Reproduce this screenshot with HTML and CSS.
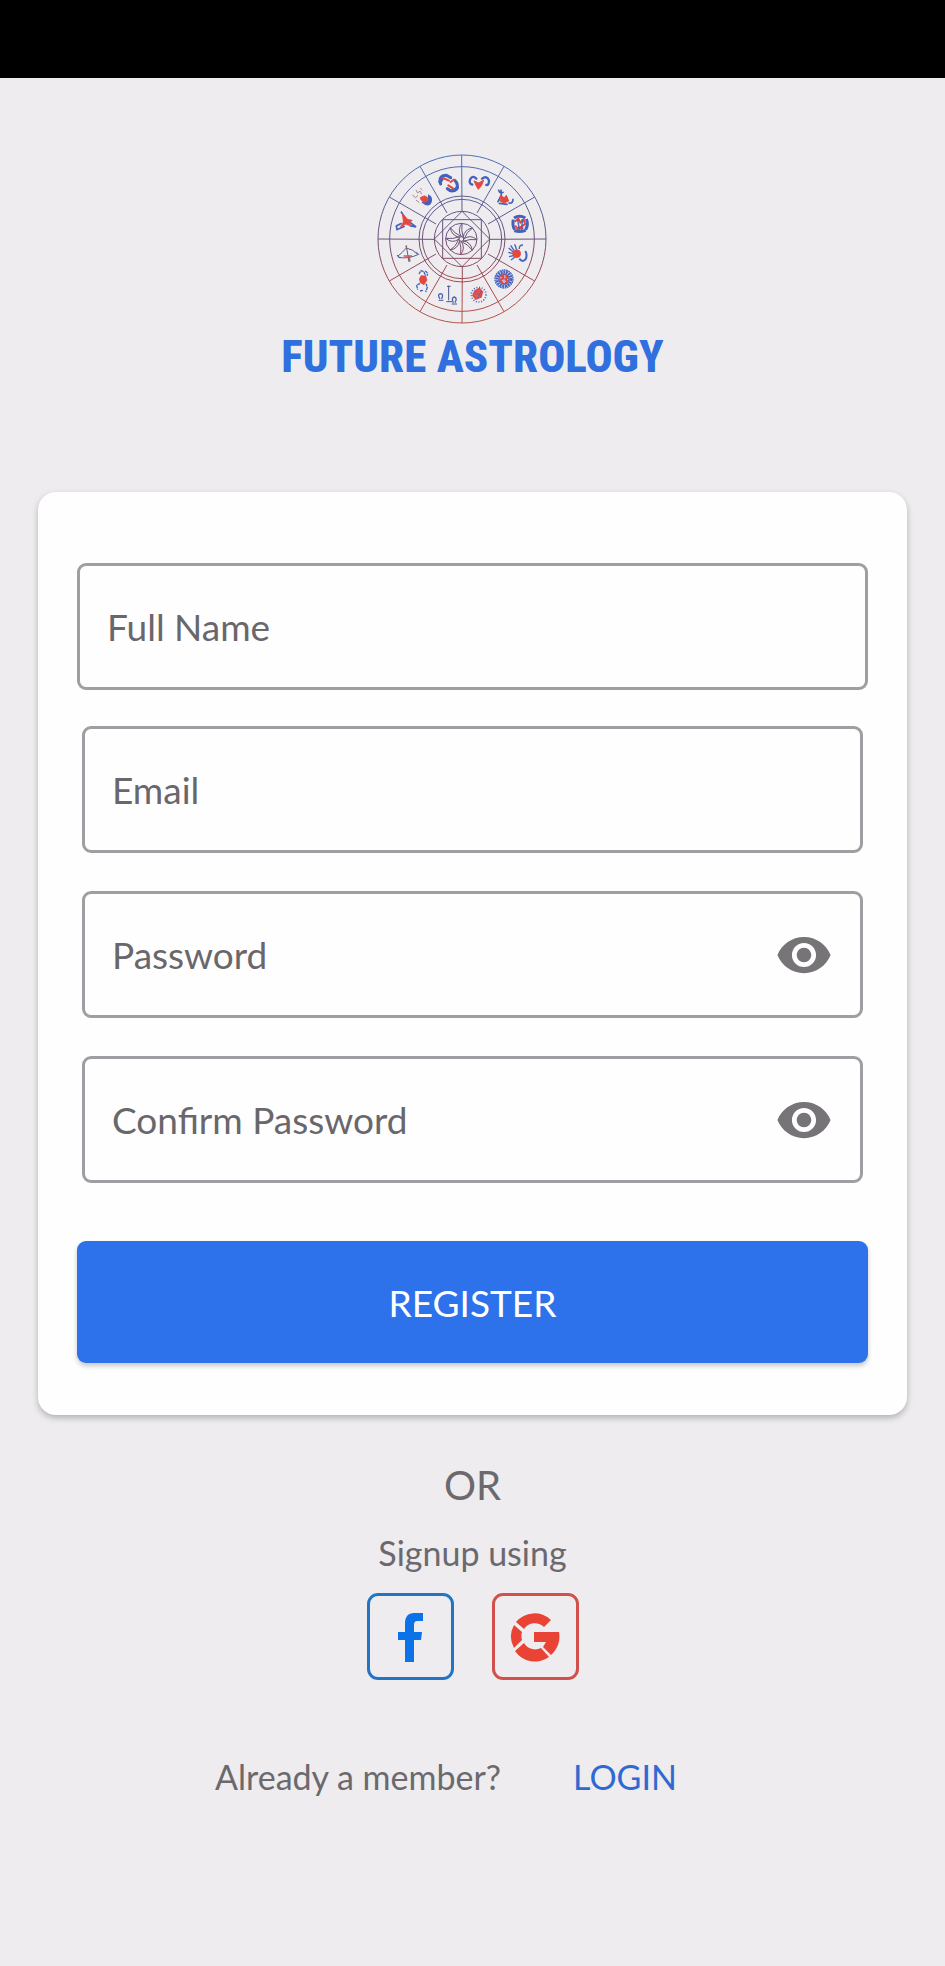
FILE: index.html
```html
<!DOCTYPE html>
<html lang="en">
<head>
    <meta charset="UTF-8">
    <meta name="viewport" content="width=device-width, initial-scale=1.0">
    <title>Future Astrology - Register</title>
    <link rel="stylesheet" href="styles.css">
</head>
<body>
    <div class="status-bar"></div>

    <header class="brand">
        <svg class="wheel" viewBox="49 40 516 516" fill="none" aria-hidden="true">
            <defs>
                <linearGradient id="ink" gradientUnits="userSpaceOnUse" x1="0" y1="46" x2="0" y2="550">
                    <stop offset="0" stop-color="#4672b8"/>
                    <stop offset="0.5" stop-color="#6a5078"/>
                    <stop offset="0.75" stop-color="#a54a50"/>
                    <stop offset="1" stop-color="#b05548"/>
                </linearGradient>
            </defs>
            <!-- rings and spokes -->
            <g stroke="url(#ink)" stroke-width="3">
                <circle cx="307" cy="298" r="252"/>
                <circle cx="307" cy="298" r="217"/>
                <circle cx="307" cy="298" r="129"/>
                <circle cx="307" cy="298" r="119"/>
                <circle cx="307" cy="298" r="83"/>
                <path d="M306 46 307 215M308 381 307 550M55 298 224 299M390 299 559 298"/>
                <path d="M433 80 352 220M525 172 385 253M525 424 385 343M433 516 352 376M181 516 262 376M89 424 229 343M89 172 229 253M181 80 262 220"/>
                <path d="M249 240H365V356H249ZM307 215 390 298 307 381 224 298Z"/>
                <circle cx="305" cy="298" r="47"/>
                <circle cx="305" cy="298" r="7"/>
                <path d="M305 291Q292 270 307 251M310 293Q315 268 339 265M312 298Q332 283 352 300M310 303Q335 308 338 332M305 305Q318 326 303 345M300 303Q295 328 271 331M298 298Q278 313 258 296M300 293Q275 288 272 264"/>
                <path d="M307 251Q304 274 311 294M339 265Q320 276 313 299M352 300Q330 297 310 305M338 332Q326 314 304 305M303 345Q306 322 299 302M271 331Q290 320 297 297M258 296Q280 299 300 291M272 264Q284 282 306 291"/>
            </g>
            <!-- pisces -->
            <g stroke="#4262bd" stroke-width="9" stroke-linecap="round">
                <path d="M243 133Q235 108 260 107L273 114M263 147Q276 160 291 148Q297 134 286 123"/>
                <path d="M241 127 247 119M284 152 293 144" stroke-width="10"/>
                <path d="M250 115 268 123M266 137 280 146M273 127 283 120" stroke="#e2483d" stroke-width="6"/>
            </g>
            <!-- aries -->
            <g stroke="#4262bd" stroke-width="7" stroke-linecap="round">
                <path d="M338 135Q326 131 332 118Q339 106 350 117M367 117Q382 106 388 123Q388 136 380 136"/>
                <path d="M344 124 357 130 372 121 366 137 356 149 349 137Z" stroke="#e2483d" fill="#e2483d" stroke-width="3"/>
            </g>
            <!-- taurus -->
            <g stroke="#4262bd" stroke-width="5" stroke-linecap="round">
                <path d="M417 152Q421 164 430 158M424 151 425 166 415 186M448 190Q459 193 460 179M419 191 442 194"/>
                <path d="M424 169 434 174 440 167 447 184 433 190 421 184Z" stroke="#e2483d" fill="#e2483d" stroke-width="3"/>
            </g>
            <!-- gemini -->
            <g stroke="#4262bd" stroke-width="9">
                <path d="M463 235Q480 225 497 235M461 240Q457 257 465 270M500 238Q507 254 498 270M464 273Q480 279 498 272"/>
                <path d="M465 246 476 237 482 249 492 239 496 253 485 261 474 266 466 258M470 269 491 265" stroke="#e2483d" stroke-width="6"/>
                <path d="M474 240 479 270M488 238 486 274" stroke-width="4"/>
            </g>
            <!-- cancer -->
            <g stroke="#4262bd" stroke-width="4">
                <path d="M463 332 453 317M461 337 447 325M460 342 446 338M461 348 448 351M465 353 454 361M471 330 465 314M479 328Q478 316 490 316"/>
                <path d="M479 357Q489 371 499 357Q503 344 497 334" stroke-width="6"/>
                <circle cx="471" cy="342" r="12" fill="#e2483d" stroke="#e2483d" stroke-width="2"/>
            </g>
            <!-- leo -->
            <g stroke="#4262bd">
                <circle cx="433" cy="418" r="27" stroke-width="4" stroke-dasharray="5 2"/>
                <circle cx="433" cy="418" r="21" stroke-width="9" stroke-dasharray="6 2"/>
                <circle cx="433" cy="418" r="15" stroke="#4b61bb" stroke-width="4" fill="#cbb0cf"/>
                <path d="M423 411 431 406 430 417 421 421 429 431M438 407 445 413 437 418 444 426 437 431" stroke="#e2483d" stroke-width="6"/>
            </g>
            <!-- virgo -->
            <g stroke="#4262bd">
                <circle cx="357" cy="465" r="22" stroke-width="5" stroke-dasharray="3 5"/>
                <path d="M346 454 359 447 368 457 364 472 349 478 340 467Z" stroke="#e2483d" stroke-width="5" fill="#e2574f"/>
                <path d="M348 458 362 467M365 454 356 472" stroke-width="2"/>
            </g>
            <!-- libra -->
            <g stroke="#4b5683" stroke-width="3">
                <path d="M267 438V482M262 440H273M260 486H277"/>
                <path d="M241 478Q232 464 242 462Q253 463 246 478M281 489Q274 473 284 472Q294 475 286 489" stroke="#4563ad" stroke-width="4"/>
                <path d="M237 482H251M276 493H292"/>
            </g>
            <!-- scorpio -->
            <g stroke="#4262bd" stroke-width="4">
                <path d="M178 403 184 393 193 396 198 410M196 394Q207 399 202 408M181 431 171 437 174 450M199 432 203 443 198 457M181 454 190 452" stroke-dasharray="9 2"/>
                <path d="M184 408 198 409 202 421 193 435 182 429 179 418Z" fill="#e2483d" stroke="#e2483d" stroke-width="2"/>
            </g>
            <!-- sagittarius -->
            <g stroke="#536092" stroke-width="3">
                <path d="M140 319 148 367M114 350Q129 338 140 325Q162 329 173 344M115 352Q143 360 177 344M112 346 121 356M169 336 178 345"/>
                <path d="M138 323 141 317M148 348 151 366M132 349H157" stroke="#d35450" stroke-width="4"/>
            </g>
            <!-- capricorn -->
            <g stroke="#4262bd" stroke-width="5">
                <path d="M124 216Q132 225 135 239M126 251 110 259 112 270 135 260M151 248 169 262 150 258"/>
                <path d="M128 221 144 239 158 242 150 249 154 258 137 254 121 264 131 247Z" fill="#e2483d" stroke="#e2483d" stroke-width="2"/>
            </g>
            <!-- aquarius -->
            <g stroke="#4262bd" stroke-width="4">
                <path d="M187 187Q207 204 214 187Q218 172 207 167Q208 190 189 188Z" fill="#4262bd"/>
                <path d="M181 174 194 168 203 173 205 184 193 188 184 181Z" fill="#e2483d" stroke="#e2483d" stroke-width="2"/>
                <path d="M169 151 174 160 181 154 186 164M158 166 168 174 175 167M169 181 179 189M182 146 188 151" stroke="#a1898d" stroke-width="3"/>
            </g>
        </svg>
        <h1 class="brand-name">FUTURE ASTROLOGY</h1>
    </header>

    <main>
        <form class="card">
            <div class="field field-wide">
                <input type="text" placeholder="Full Name" aria-label="Full Name">
            </div>
            <div class="field">
                <input type="email" placeholder="Email" aria-label="Email">
            </div>
            <div class="field">
                <input type="password" placeholder="Password" aria-label="Password">
                <button type="button" class="toggle" aria-label="Show password">
                    <svg viewBox="0 0 24 24"><path d="M12 4.5C7 4.5 2.73 7.61 1 12c1.73 4.39 6 7.5 11 7.5s9.27-3.11 11-7.5c-1.73-4.39-6-7.5-11-7.5zM12 17c-2.76 0-5-2.24-5-5s2.24-5 5-5 5 2.24 5 5-2.24 5-5 5zm0-8c-1.66 0-3 1.34-3 3s1.34 3 3 3 3-1.34 3-3-1.34-3-3-3z"/></svg>
                </button>
            </div>
            <div class="field">
                <input type="password" placeholder="Confirm Password" aria-label="Confirm Password">
                <button type="button" class="toggle" aria-label="Show confirm password">
                    <svg viewBox="0 0 24 24"><path d="M12 4.5C7 4.5 2.73 7.61 1 12c1.73 4.39 6 7.5 11 7.5s9.27-3.11 11-7.5c-1.73-4.39-6-7.5-11-7.5zM12 17c-2.76 0-5-2.24-5-5s2.24-5 5-5 5 2.24 5 5-2.24 5-5 5zm0-8c-1.66 0-3 1.34-3 3s1.34 3 3 3 3-1.34 3-3-1.34-3-3-3z"/></svg>
                </button>
            </div>
            <button type="submit" class="register">REGISTER</button>
        </form>

        <section class="signup">
            <p class="or">OR</p>
            <p class="using">Signup using</p>
            <div class="social">
                <button type="button" class="social-btn facebook" aria-label="Facebook">
                    <svg viewBox="0 0 50 50"><path d="M26 1H17C11 1 8 5 8 11V20H1V28H8V50H17V28H24L25 20H17V13Q17 9 20 9H26Z" transform="translate(12)"/></svg>
                </button>
                <button type="button" class="social-btn google" aria-label="Google">
                    <svg viewBox="0 0 50 50">
                        <path d="M41 8 34 15A13 13 0 0 0 14 17L6 10A24 24 0 0 1 41 8Z"/>
                        <path d="M4 13 12 20A14 14 0 0 0 12 28L4 36A24 24 0 0 1 4 13Z"/>
                        <path d="M5 39 14 31A13 13 0 0 0 31 36L39 45A24 24 0 0 1 5 39Z"/>
                        <path d="M24 20H49A24 24 0 0 1 41 43L33 35 36 30H24Z"/>
                    </svg>
                </button>
            </div>
        </section>

        <div class="member">
            <span>Already a member?</span>
            <a href="#">LOGIN</a>
        </div>
    </main>
</body>
</html>
```

FILE: styles.css
```css
* {
    box-sizing: border-box;
}

body {
    margin: 0;
    min-height: 100vh;
    font-family: Lato, sans-serif;
    color: #6b696d;
    background: #eeecef;
}

p, h1 {
    margin: 0;
}

button {
    padding: 0;
    border: 0;
    background: none;
    font-family: inherit;
    cursor: pointer;
}

.status-bar {
    height: 78px;
    background: #000;
}

.brand {
    display: flex;
    flex-direction: column;
    align-items: center;
    padding-top: 75px;
}

.wheel {
    width: 172px;
    height: 172px;
    margin-right: 22px;
}

.brand-name {
    font-family: "Roboto Condensed", "Liberation Sans Narrow", "DejaVu Sans Condensed", sans-serif;
    font-size: 45px;
    line-height: 64px;
    font-weight: 800;
    color: #2f70de;
    white-space: nowrap;
}

.card {
    display: flex;
    flex-direction: column;
    gap: 38px;
    margin: 103px 38px 0;
    padding: 71px 39px 52px;
    border-radius: 18px;
    background: #fefefe;
    box-shadow: 0 3px 6px rgba(0, 0, 0, 0.25);
}

.field {
    display: flex;
    align-items: center;
    height: 127px;
    margin: 0 5px;
    padding: 0 27px;
    border: 3px solid #a09ea2;
    border-radius: 9px;
}

.field-wide {
    margin: 0 0 -2px;
}

.field input {
    flex: 1;
    min-width: 0;
    height: 100%;
    padding: 0;
    border: 0;
    outline: 0;
    background: none;
    font-family: inherit;
    font-size: 37px;
    color: #333;
}

.field input::placeholder {
    color: #69676b;
    opacity: 1;
}

.toggle svg {
    display: block;
    width: 58px;
    height: 58px;
    fill: #777478;
}

.register {
    height: 122px;
    margin-top: 20px;
    border-radius: 9px;
    background: #2d72ea;
    box-shadow: 0 3px 5px rgba(0, 0, 0, 0.22);
    color: #fff;
    font-size: 37px;
}

.signup {
    display: flex;
    flex-direction: column;
    align-items: center;
    padding-top: 44px;
}

.or {
    font-size: 40px;
    line-height: 52px;
}

.using {
    margin-top: 20px;
    font-size: 34px;
    line-height: 44px;
}

.social {
    display: flex;
    gap: 38px;
    margin-top: 18px;
}

.social-btn {
    display: flex;
    align-items: center;
    justify-content: center;
    width: 87px;
    height: 87px;
    border: 3px solid;
    border-radius: 11px;
}

.social-btn svg {
    width: 50px;
    height: 50px;
    fill: currentColor;
}

.facebook {
    border-color: #2474c6;
    color: #0b72e8;
}

.google {
    border-color: #d2504a;
    color: #e94335;
}

.member {
    display: flex;
    justify-content: center;
    gap: 72px;
    padding: 75px 53px 60px 0;
    font-size: 34px;
    line-height: 44px;
}

.member a {
    color: #2f6ad0;
    text-decoration: none;
}
```
